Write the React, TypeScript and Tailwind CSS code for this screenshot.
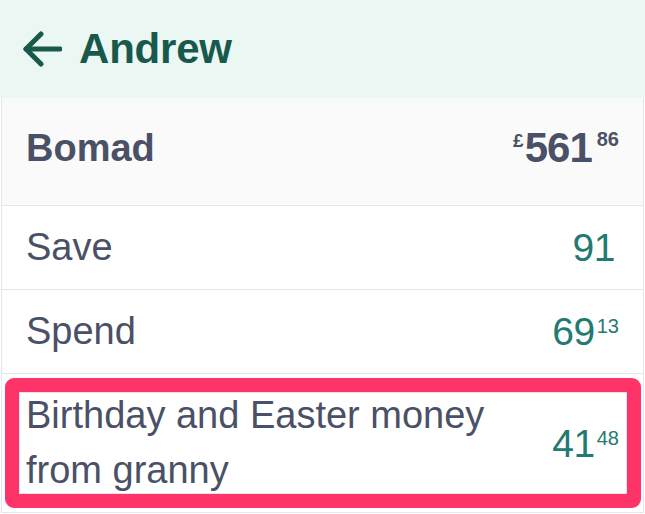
import React from 'react';

interface Pot {
  name: string;
  pounds: string;
  pence?: string;
  highlighted?: boolean;
}

const pots: Pot[] = [
  { name: 'Save', pounds: '91' },
  { name: 'Spend', pounds: '69', pence: '13' },
  { name: 'Birthday and Easter money from granny', pounds: '41', pence: '48', highlighted: true },
];

const Amount: React.FC<{ pounds: string; pence?: string }> = ({ pounds, pence }) => (
  <div className={`flex shrink-0 items-start text-[#237a70] ${pence ? '' : 'mr-[4px]'}`}>
    <span className="text-[39px] leading-none tracking-[-0.5px]">{pounds}</span>
    {pence && <span className="ml-[2px] mt-[4px] text-[20px] leading-none">{pence}</span>}
  </div>
);

export default function App() {
  return (
    <div className="h-[514px] w-[645px] overflow-hidden bg-white font-['Liberation_Sans',Arial,sans-serif]">
      <div className="flex h-[98px] items-center gap-[17px] bg-[#ebf7f3] px-[22px] text-[#18594c]">
        <svg width="40" height="36" viewBox="0 0 40 36" fill="none" stroke="currentColor" strokeWidth="5" strokeLinecap="round" strokeLinejoin="round">
          <path d="M38 18H4" />
          <path d="M19 3L4 18L19 33" />
        </svg>
        <div className="text-[42px] font-bold leading-none tracking-[-0.2px]">Andrew</div>
      </div>

      <div className="mx-px border-x border-[#e5e7eb]">
        <div className="flex h-[108px] items-center justify-between border-b border-[#e5e7eb] bg-[#fafafa] pb-[8px] pl-[24px] pr-[24px] text-[#4a5166]">
          <div className="text-[38px] font-bold leading-none">Bomad</div>
          <div className="flex items-start font-bold">
            <span className="mt-[4px] mr-[1px] text-[19px] leading-none">£</span>
            <span className="text-[42px] leading-none tracking-[-1px]">561</span>
            <span className="ml-[5px] mt-[2px] text-[20px] leading-none">86</span>
          </div>
        </div>

        {pots.map((pot) => (
          <div
            key={pot.name}
            className="relative flex items-center justify-between gap-8 border-b border-[#e5e7eb] py-[14px] pl-[24px] pr-[24px]"
          >
            <div className="flex-1 text-[38px] leading-[55px] text-[#4a5166]">{pot.name}</div>
            <Amount pounds={pot.pounds} pence={pot.pence} />
            {pot.highlighted && (
              <div className="pointer-events-none absolute left-[3px] top-[4px] h-[130px] w-[636px] rounded-[9px] border-[14px] border-[#fe3468]">
                <div className="h-full w-full border border-[#e3e5ea]" />
              </div>
            )}
          </div>
        ))}
      </div>
    </div>
  );
}
